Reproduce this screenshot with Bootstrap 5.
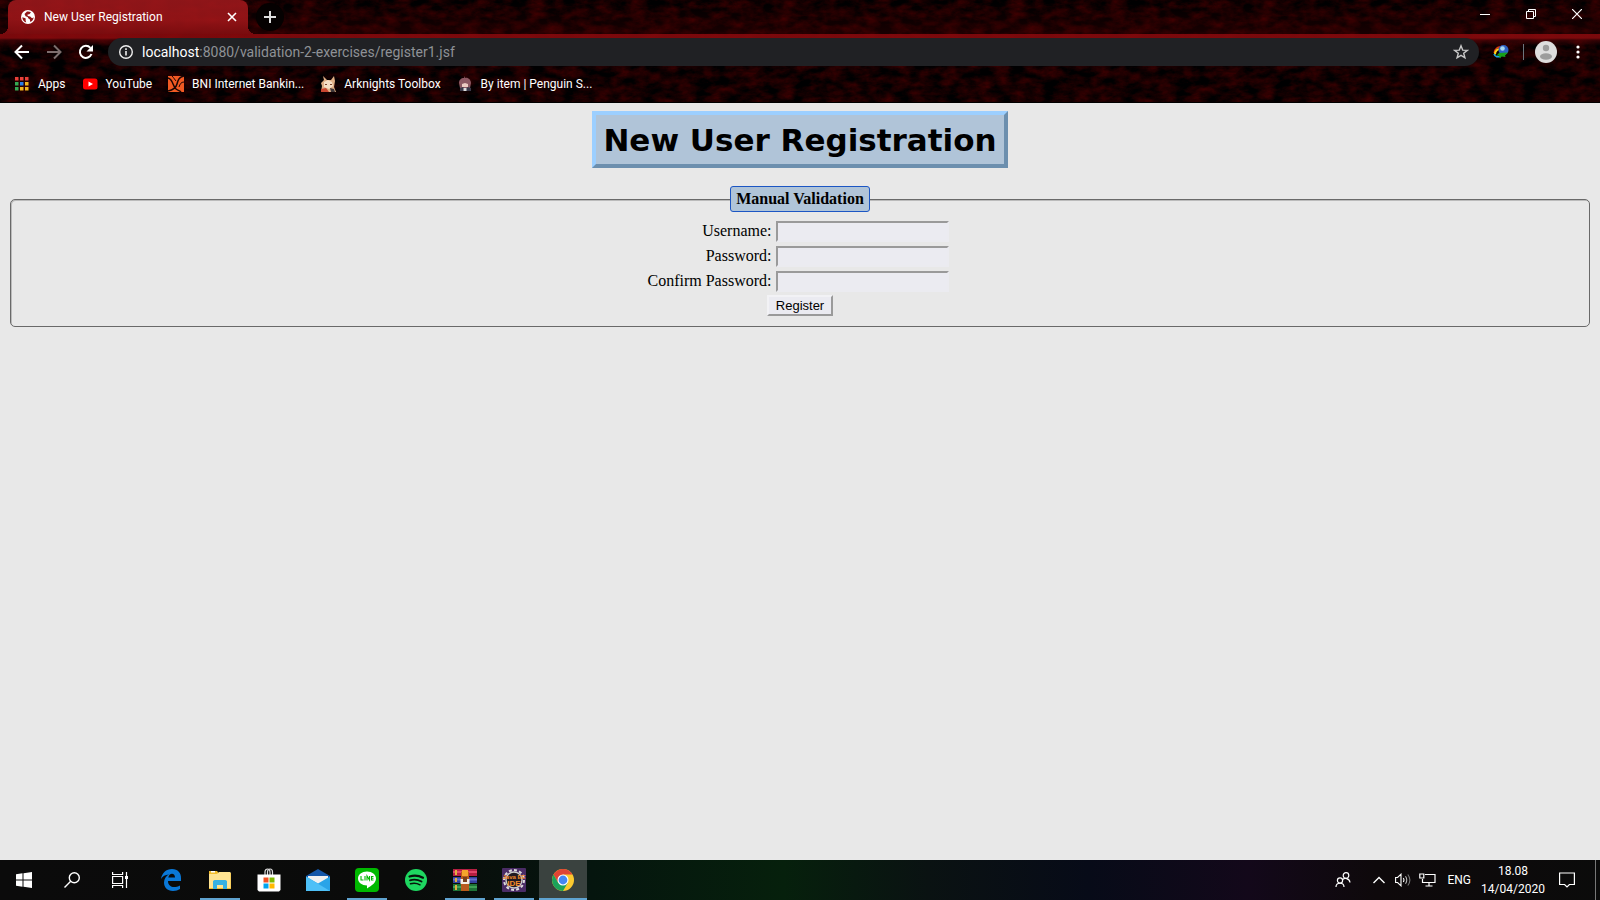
<!DOCTYPE html>
<html lang="en">
<head>
<meta charset="utf-8">
<meta name="viewport" content="width=device-width, initial-scale=1">
<title>New User Registration</title>
<link href="https://cdn.jsdelivr.net/npm/bootstrap@5.3.0/dist/css/bootstrap.min.css" rel="stylesheet">
<style>
body { background: #e8e8e8; font-family: Roboto, "Open Sans", sans-serif; font-size: 12px; color: #000; }
svg { display: block; flex: none; }
button { border: 0; background: none; padding: 0; color: inherit; }

/* browser frame */
.chrome-frame { color: #fff; background-color: #130001; border-bottom: 1px solid #000; }
.rock { background-image: url("data:image/svg+xml,%3Csvg xmlns='http://www.w3.org/2000/svg' width='480' height='104'%3E%3Cfilter id='f' x='0' y='0' width='100%25' height='100%25' color-interpolation-filters='sRGB'%3E%3CfeTurbulence type='fractalNoise' baseFrequency='.06 .12' numOctaves='6' seed='4' stitchTiles='stitch'/%3E%3CfeColorMatrix values='.42 0 0 0 -.13 0 0 0 0 0 0 0 0 0 .004 0 0 0 0 1'/%3E%3C/filter%3E%3Crect width='480' height='104' filter='url(%23f)'/%3E%3C/svg%3E"); }
.tab-strip { height: 34px; background-image: linear-gradient(#0000 10%, #4a000055); padding-left: 8px; }
.page-tab { position: relative; width: 240px; height: 34px; padding: 0 8px 0 12px; border-radius: 8px 8px 0 0; background: linear-gradient(#a0181ce0, #a41619d8 60%, #850d10e0); }
.page-tab::before, .page-tab::after { content: ""; position: absolute; bottom: 0; width: 8px; height: 8px; }
.page-tab::before { right: 100%; background: radial-gradient(circle at 0 0, #0000 8px, #780c0f 8px); }
.page-tab::after { left: 100%; background: radial-gradient(circle at 100% 0, #0000 8px, #780c0f 8px); }
.tab-gap { margin-left: 8px; }
.new-tab { width: 28px; height: 28px; border-radius: 50%; background: #050101; }
.win-btn { width: 46px; height: 28px; }
.tool-row { height: 36px; padding: 4px 8px; background-image: linear-gradient(#8a0a0de0 4px, #5a0508a0 6px, #0000 12px); }
.tool-btn { width: 28px; height: 28px; }
.address { height: 28px; border-radius: 14px; background: #202124; padding: 0 10px; }
.url { font-size: 14px; color: #8f9296; }
.url b { font-weight: 400; color: #fff; }
.mark-row { height: 32px; padding: 0 14px 4px; }
.mark-row a { color: #fff; text-decoration: none; white-space: nowrap; gap: 8px; }

/* registration page */
.reg-page { font: 16px "Liberation Serif", serif; padding: 8px 8px 0; }
.reg-title { font: bold 31px/39px "DejaVu Sans", sans-serif; background: #b0c4d8; border: 4px solid; border-color: #9ccfff #6c8fae #6c8fae #9ccfff; padding: 6px 7px 4px; margin: 0 0 18px; }
.reg-set { border: 1px solid #696969; box-shadow: inset 1px 1px #bbb; border-radius: 5px; margin: 0 2px; padding: 9px 12px 10px; min-width: 0; }
.reg-set legend { float: none; width: auto; margin: 0 auto; font: bold 16px/18px "Liberation Serif", serif; background: #b0c4d8; border: 1px solid #1c56c4; border-radius: 3px; padding: 3px 5px; }
.reg-grid { display: grid; grid-template-columns: auto 173px; gap: 4px; align-items: start; text-align: right; padding-right: 4px; }
.reg-grid label { line-height: 19px; }
.reg-grid input { height: 21px; width: 173px; border: 2px solid; border-color: #9a9a9a #ebebf0 #ebebf0 #9a9a9a; background: #ebebf1; padding: 0 1px; font: 13px "Liberation Sans", sans-serif; }
.reg-send { font: 13px/17px "Liberation Sans", sans-serif; width: 66px; height: 21px; border: 2px solid; border-color: #f2f2f5 #9a9a9a #9a9a9a #f2f2f5; background: #ebebf1; margin-top: 3px; color: #000; }

/* taskbar */
.taskbar { height: 40px; color: #fff; background: linear-gradient(90deg, #0b0b0b, #0a0b0a 25%, #05150e 37%, #06200c 49%, #0a1212 58%, #070b18 68%, #13081a 78%, #0e090b 86%, #0b0b0b); }
.task-btn { width: 48px; height: 40px; position: relative; }
.task-apps { gap: 1px; margin-left: 3px; }
.task-run::after { content: ""; position: absolute; left: 4px; right: 4px; bottom: 0; height: 2px; background: #5fa3d0; }
.task-on { background: #3a423f; }
.task-on::after { left: 0; right: 0; }
.tray-btn { width: 24px; height: 40px; }
.tray-people { margin-right: 12px; }
.clock { line-height: 18px; width: 76px; }
.peek { width: 5px; border-left: 1px solid #777; }
</style>
</head>
<body class="vh-100 d-flex flex-column overflow-hidden">

<header class="chrome-frame rock">
  <div class="tab-strip d-flex align-items-center">
    <div class="page-tab d-flex align-items-center">
      <svg width="16" height="16" viewBox="0 0 16 16"><circle cx="8" cy="8" r="7" fill="#fff"/><path d="M2.300 8.200 4.800 9c1 .3 1.200 1.200.7 2l.7 2.500C3.800 12.800 2.300 10.600 2.300 8.200zM7 2.600c1.300-.3 2.900 0 4 .8L9.300 5.200l-1.800.4.2 1.500 2.500.4 1.500 1.600c1 .2 1.500-.4 2-.8-.2 2.100-1.500 4-3.400 4.800l-.4-2.600-1.700-1.200L7.700 8 5.600 7.200 4.500 5z" fill="#8f1518"/></svg>
      <span class="flex-grow-1 ms-2">New User Registration</span>
      <button class="d-flex justify-content-center" aria-label="Close tab"><svg width="16" height="16" viewBox="0 0 16 16" stroke="#fff" stroke-width="1.600"><path d="m4 4 8 8M12 4l-8 8"/></svg></button>
    </div>
    <button class="new-tab tab-gap d-flex align-items-center justify-content-center" aria-label="New tab"><svg width="14" height="14" viewBox="0 0 14 14" stroke="#ddd" stroke-width="2"><path d="M7 1v12M1 7h12"/></svg></button>
    <div class="ms-auto d-flex align-self-start">
      <button class="win-btn d-flex align-items-center justify-content-center" aria-label="Minimize"><svg width="10" height="10" stroke="#fff"><path d="M0 5.500h10"/></svg></button>
      <button class="win-btn d-flex align-items-center justify-content-center" aria-label="Restore"><svg width="10" height="10" fill="none" stroke="#fff"><path d="M.5 2.500h7v7h-7zM2.500 2.500v-2h7v7h-2"/></svg></button>
      <button class="win-btn d-flex align-items-center justify-content-center" aria-label="Close"><svg width="10" height="10" stroke="#fff" stroke-width="1.200"><path d="m0 0 10 10M10 0 0 10"/></svg></button>
    </div>
  </div>

  <div class="tool-row d-flex align-items-center gap-1">
    <button class="tool-btn d-flex align-items-center justify-content-center" aria-label="Back"><svg width="16" height="16" viewBox="0 0 16 16" fill="none" stroke="#fff" stroke-width="2"><path d="M15 8H2M8 1.500 1.500 8 8 14.500"/></svg></button>
    <button class="tool-btn d-flex align-items-center justify-content-center" aria-label="Forward"><svg width="16" height="16" viewBox="0 0 16 16" fill="none" stroke="#7d6e6e" stroke-width="2"><path d="M1 8h13M8 1.500 14.500 8 8 14.500"/></svg></button>
    <button class="tool-btn d-flex align-items-center justify-content-center" aria-label="Reload"><svg width="16" height="16" viewBox="0 0 16 16"><path d="M13.500 10A6 6 0 1 1 12.400 3.900" fill="none" stroke="#fff" stroke-width="2"/><path d="M15 1v6.500H8.500z" fill="#fff"/></svg></button>
    <div class="address flex-grow-1 d-flex align-items-center ms-1">
      <svg width="16" height="16" viewBox="0 0 16 16" stroke="#eee" fill="none"><circle cx="8" cy="8" r="6.300" stroke-width="1.400"/><path d="M8 7v4.500M8 4.300v1.600" stroke-width="1.600"/></svg>
      <span class="url ms-2 flex-grow-1"><b>localhost</b>:8080/validation-2-exercises/register1.jsf</span>
      <svg width="16" height="16" viewBox="0 0 16 16" fill="none" stroke="#c8c8c8" stroke-width="1.400"><path d="m8 1.800 1.700 4.300 4.600.3-3.600 2.900 1.200 4.500L8 11.300l-3.900 2.500 1.200-4.500L1.700 6.400l4.600-.3z"/></svg>
    </div>
    <button class="tool-btn d-flex align-items-center justify-content-center mx-1" aria-label="Download manager"><svg width="16" height="16" viewBox="0 0 16 16" fill="none"><path d="M9 3.500C5 2 1 5.500 1.300 9" stroke="#e33b16" stroke-width="1.500"/><path d="M8 5C4.500 4.500 2 7 2 10.500" stroke="#ffd815" stroke-width="2"/><path d="M1 10c1 3 4 3.500 7 2" stroke="#19a5e8" stroke-width="1.500"/><circle cx="10.500" cy="6" r="5" fill="#2d62c5"/><circle cx="9.500" cy="4.500" r="2.300" fill="#a6d7ee"/><path d="m6 9 9-.5-3 3 .5 1.500-4-.5-1.500 2-1-3-3 .5z" fill="#16a01a"/></svg></button>
    <i class="border-start border-secondary py-2"></i>
    <button class="tool-btn d-flex align-items-center justify-content-center ms-1" aria-label="Profile"><svg width="22" height="22" viewBox="0 0 22 22"><circle cx="11" cy="11" r="11" fill="#dedede"/><circle cx="11" cy="7" r="3.200" fill="#9c9c9c"/><ellipse cx="11" cy="15.500" rx="6" ry="3.200" fill="#9c9c9c"/></svg></button>
    <button class="tool-btn d-flex align-items-center justify-content-center" aria-label="Menu"><svg width="4" height="14" fill="#fff"><circle cx="2" cy="2" r="1.600"/><circle cx="2" cy="7" r="1.600"/><circle cx="2" cy="12" r="1.600"/></svg></button>
  </div>

  <nav class="mark-row d-flex align-items-center gap-3">
    <a href="#" class="d-flex align-items-center"><svg width="16" height="16" viewBox="0 0 16 16"><path d="M1 1h3.500v3.500H1zm5 0h3.500v3.500H6zm5 0h3.500v3.500H11z" fill="#e8413a"/><path d="M1 6h3.500v3.500H1zM1 11h3.500v3.500H1z" fill="#34a853"/><path d="M6 6h3.500v3.500H6z" fill="#2b7de9"/><path d="M11 6h3.500v3.500H11zm-5 5h3.500v3.500H6zm5 0h3.500v3.500H11z" fill="#f6b51d"/></svg>Apps</a>
    <a href="#" class="d-flex align-items-center"><svg width="16" height="16" viewBox="0 0 16 16"><rect x="1" y="2.500" width="14.500" height="11" rx="2.500" fill="#f00"/><path d="m6.500 5.500 4.500 2.500-4.500 2.500z" fill="#fff"/></svg>YouTube</a>
    <a href="#" class="d-flex align-items-center"><svg width="16" height="16" viewBox="0 0 16 16"><path fill="#f15a23" d="M0 0h16v16H0z"/><path d="M0 2c5 1 5 9 8 11 2 1.500 4 2 5 3M16 0c-5 1-6 4-7 8s-4 6-9 7" fill="none" stroke="#1a0503" stroke-width="1.500"/><path d="M4 0c2 2 3 4 4 5M16 6c-3 0-4 2-5 5" fill="none" stroke="#1a0503"/></svg>BNI Internet Bankin...</a>
    <a href="#" class="d-flex align-items-center"><svg width="16" height="16" viewBox="0 0 16 16"><path d="M3 0l4 4h4l3-4 1 5-1 6 2 5H1l1-6-1-3 3-3z" fill="#dfae84"/><path d="M4 6l4-2 4 2 1 4-4 3-5-2z" fill="#f6dfc5"/><path d="M1 13l5-1 3 4H1z" fill="#c9452f"/><path d="M10 12l4 1 1 3h-4z" fill="#3d3638"/><path d="M5 8h2v1H5zm5 0h2v1h-2z" fill="#79452f"/></svg>Arknights Toolbox</a>
    <a href="#" class="d-flex align-items-center"><svg width="16" height="16" viewBox="0 0 16 16"><path d="M7 0l1 2c3-1 6 2 6 5l-1 5H3L2 7c0-3 2-5 5-5z" fill="#8c5862"/><path d="M5 8l3-1 3 1v3H5z" fill="#eccbc2"/><path d="M3 12l3-1 2 2 3-2 3 1v3H3z" fill="#3b3a4a"/><path d="M6.500 12h3v3h-3z" fill="#ddd"/></svg>By item | Penguin S...</a>
  </nav>
</header>

<main class="reg-page flex-grow-1">
  <div class="d-flex justify-content-center"><h1 class="reg-title">New User Registration</h1></div>
  <form>
    <fieldset class="reg-set">
      <legend>Manual Validation</legend>
      <div class="d-flex flex-column align-items-center">
        <div class="reg-grid">
          <label for="user">Username:</label><input id="user" type="text">
          <label for="pass">Password:</label><input id="pass" type="password">
          <label for="pass2">Confirm Password:</label><input id="pass2" type="password">
        </div>
        <button type="button" class="reg-send">Register</button>
      </div>
    </fieldset>
  </form>
</main>

<footer class="taskbar d-flex align-items-center">
  <button class="task-btn d-flex align-items-center justify-content-center" aria-label="Start"><svg width="16" height="16" viewBox="0 0 16 16" fill="#fff"><path d="M0 2.200 6.500 1.300v6.200H0zM7.500 1.200 16 0v7.500H7.500zM0 8.500h6.500v6.200L0 13.800zM7.500 8.500H16V16l-8.500-1.200z"/></svg></button>
  <button class="task-btn d-flex align-items-center justify-content-center" aria-label="Search"><svg width="16" height="16" viewBox="0 0 16 16" fill="none" stroke="#fff" stroke-width="1.400"><circle cx="10.300" cy="5.700" r="5"/><path d="M6.700 9.300.5 15.500"/></svg></button>
  <button class="task-btn d-flex align-items-center justify-content-center" aria-label="Task view"><svg width="16" height="16" viewBox="0 0 16 16" fill="none" stroke="#fff" stroke-width="1.200"><path d="M.6 4.500h10v7H.6zM.6 0v2.500h10V0M.6 16v-2.500h10V16M14.500 0v16"/><path d="M13 4h3v3h-3z" fill="#fff" stroke="none"/></svg></button>
  <div class="task-apps d-flex">
    <button class="task-btn d-flex align-items-center justify-content-center" aria-label="Edge"><svg width="22" height="22" viewBox="0 0 22 22"><path d="M1 10C2 4 6 0 12 0c6 0 9 4 9 9v3H8c0 4 3 6 6 6 2 0 4-.6 6-1.600V20c-2 1.200-4 2-7 2-6 0-9-4-9-8.500C4 10 6 7 9 5.600 5 5.800 2.500 7.500 1 10zM8.300 8.500H15C15 6 13.800 4.700 12 4.700S8.800 6 8.300 8.500z" fill="#0a78d7"/></svg></button>
    <button class="task-btn task-run d-flex align-items-center justify-content-center" aria-label="File Explorer"><svg width="22" height="20" viewBox="0 0 22 20"><path d="M0 1h8l1.500 2H22v16H0z" fill="#f3bd2d"/><path d="M0 4h8l2-2h11.500v16H0z" fill="#ffe391"/><path d="M2 1h4v1.500H2z" fill="#fff"/><path d="M4 19v-8l1.500-1h11l1.500 1v8h-4v-4H8v4z" fill="#36b1e3"/></svg></button>
    <button class="task-btn d-flex align-items-center justify-content-center" aria-label="Store"><svg width="24" height="24" viewBox="0 0 24 24"><path d="M8 7V4c0-4 5-4 5 0v3M10.500 7V4c0-4 5-4 5 0v3" fill="none" stroke="#ddd" stroke-width="1.200"/><path d="M.5 6.500h23V22l-1.500 1.500H2L.5 22z" fill="#fff"/><path d="M6.500 9.500h5v5h-5z" fill="#f15022"/><path d="M12.500 9.500h5v5h-5z" fill="#7fba00"/><path d="M6.500 15.500h5v5h-5z" fill="#00a4ef"/><path d="M12.500 15.500h5v5h-5z" fill="#ffb900"/></svg></button>
    <button class="task-btn d-flex align-items-center justify-content-center" aria-label="Mail"><svg width="24" height="22" viewBox="0 0 24 22"><path d="M0 7l12-7 12 7v5H0z" fill="#1456a8"/><path d="M2 7h20v8H2z" fill="#f0f0f0"/><path d="M0 7.500 12 14.500 24 7.500V22H0z" fill="#2aa4e8"/><path d="M0 7.500 24 22H0z" fill="#4ec0f7"/></svg></button>
    <button class="task-btn task-run d-flex align-items-center justify-content-center" aria-label="LINE"><svg width="24" height="24" viewBox="0 0 24 24"><rect width="24" height="24" rx="4" fill="#00b900"/><path d="M12 3.500c5 0 9 3 9 7 0 4-4 7-9 10v-3c-5 0-9-3-9-7s4-7 9-7z" fill="#fff"/><path d="M6 8v4h2.500M10 8v4.500M12 12.500V8l2.500 4V8M18.500 8.500H16.500v3.500h2M16.500 10.300h2" fill="none" stroke="#00b900" stroke-width="1.100"/></svg></button>
    <button class="task-btn d-flex align-items-center justify-content-center" aria-label="Spotify"><svg width="24" height="24" viewBox="0 0 24 24" fill="none" stroke="#07130b" stroke-linecap="round"><circle cx="12" cy="12" r="11" fill="#1ed760" stroke="none"/><path d="M5.500 8.500c4.500-1.400 9.500-.9 13.500 1.200" stroke-width="2.200"/><path d="M6 12.300c4-1.200 8-.7 11.500 1.200" stroke-width="1.900"/><path d="M6.500 15.800c3.500-1 6.500-.6 9.500 1" stroke-width="1.500"/></svg></button>
    <button class="task-btn task-run d-flex align-items-center justify-content-center" aria-label="WinRAR"><svg width="24" height="22" viewBox="0 0 24 22"><path d="M0 0h24v7H0z" fill="#b51f42"/><path d="M0 2h24v2H0z" fill="#e2476a"/><path d="M0 8h24v6H0z" fill="#35409e"/><path d="M0 9.500h24v2H0z" fill="#6571ce"/><path d="M0 15h24v7H0z" fill="#1e7337"/><path d="M0 17h24v2H0z" fill="#3fa255"/><path d="M2 1h2v5H2zM2 9h2v4H2zM2 16h2v5H2z" fill="#e0b040"/><path d="M8 3l4-2 4 2v19H8z" fill="#b85b1c"/><path d="M9 1h6v6H9z" fill="#f4a62c"/><path d="M7.500 10h9v5h-9z" fill="#f4eee0"/><path d="M10 8h4v5h-4z" fill="#76401d"/></svg></button>
    <button class="task-btn task-run d-flex align-items-center justify-content-center" aria-label="Java EE IDE"><svg width="24" height="24" viewBox="0 0 24 24"><rect width="24" height="24" rx="1" fill="#4a2c66"/><circle cx="12" cy="12" r="10" fill="none" stroke="#ddd" stroke-width="2" stroke-dasharray="3 2.200"/><circle cx="12" cy="12" r="8" fill="#211a22" stroke="#ccc" stroke-width="1.400"/><g fill="#f28a28" font-family="Liberation Sans" font-weight="700" text-anchor="middle"><text x="12" y="11" font-size="6">Java EE</text><text x="12" y="18" font-size="8">IDE</text></g></svg></button>
    <button class="task-btn task-run task-on d-flex align-items-center justify-content-center" aria-label="Chrome"><svg width="22" height="22" viewBox="0 0 22 22"><circle cx="11" cy="11" r="11" fill="#fbc92f"/><path d="M1.500 5.500A11 11 0 0 1 20.500 5.500H11L6.200 13.700z" fill="#e04434"/><path d="M1.500 5.500A11 11 0 0 0 11 22l4.800-8.200H6.200z" fill="#1ba25a"/><circle cx="11" cy="11" r="5.500" fill="#fff"/><circle cx="11" cy="11" r="4.400" fill="#4587f3"/></svg></button>
  </div>

  <div class="ms-auto d-flex align-items-center">
    <button class="tray-btn tray-people d-flex align-items-center justify-content-center" aria-label="People"><svg width="16" height="16" viewBox="0 0 16 16" fill="none" stroke="#fff" stroke-width="1.200"><circle cx="11" cy="3.500" r="2.800"/><circle cx="5" cy="8.500" r="2.600"/><path d="M1 15c0-5 8-5 8 0M7.500 8C9 5.500 14.500 6 15 10.500"/></svg></button>
    <button class="tray-btn d-flex align-items-center justify-content-center" aria-label="Hidden icons"><svg width="12" height="8" fill="none" stroke="#fff" stroke-width="1.400"><path d="m.5 7 5.500-5.500L11.500 7"/></svg></button>
    <button class="tray-btn d-flex align-items-center justify-content-center" aria-label="Volume"><svg width="16" height="14" viewBox="0 0 16 14" fill="none" stroke="#fff" stroke-width="1.100"><path d="M.6 4.500h2L6 1.200v11.600L2.600 9.500h-2zM8.300 5c.8 1.200.8 2.800 0 4"/><path d="M10.500 3.200c1.600 2.400 1.600 5.200 0 7.600" stroke="#bbb"/><path d="M12.800 1.500c2.600 3.400 2.600 7.600 0 11" stroke="#777"/></svg></button>
    <button class="tray-btn d-flex align-items-center justify-content-center" aria-label="Network"><svg width="17" height="14" viewBox="0 0 17 14" fill="none" stroke="#fff" stroke-width="1.200"><path d="M6 1.500h10v8H3.500V6M10 9.500v3.500M6.500 13h7M.8 1h4v4h-4z"/></svg></button>
    <span class="ms-2">ENG</span>
    <time class="clock text-center ms-1">18.08<br>14/04/2020</time>
    <button class="tray-btn d-flex align-items-center justify-content-center ms-1 me-3" aria-label="Notifications"><svg width="16" height="16" viewBox="0 0 16 16" fill="none" stroke="#fff" stroke-width="1.200"><path d="M.6 1h14.800v11.500h-5L8 15l-2.400-2.500h-5z"/></svg></button>
    <div class="peek align-self-stretch">&nbsp;</div>
  </div>
</footer>
<script src="https://cdn.jsdelivr.net/npm/bootstrap@5.3.0/dist/js/bootstrap.bundle.min.js"></script>
</body>
</html>
